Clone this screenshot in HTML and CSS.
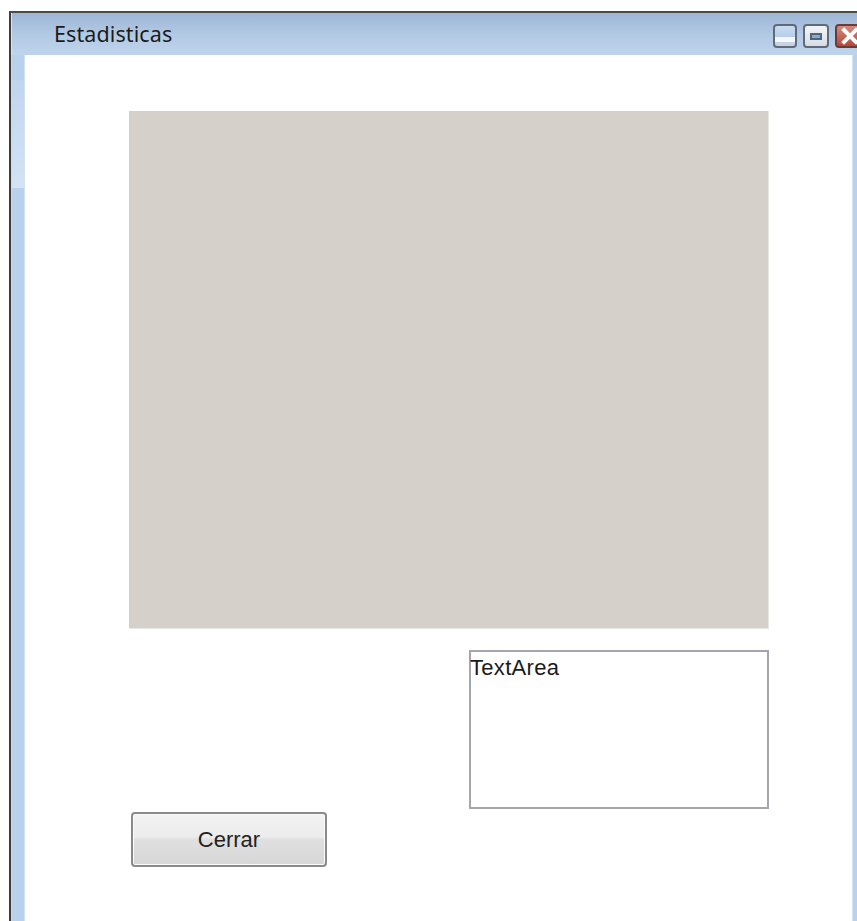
FILE: index.html
```html
<!DOCTYPE html>
<html lang="es">
<head>
<meta charset="utf-8">
<title>Estadisticas</title>
<link rel="stylesheet" href="styles.css">
</head>
<body>
<div class="window">
  <div class="titlebar">
    <span class="title">Estadisticas</span>
    <div class="controls">
      <span class="ctl ctl-min"></span>
      <span class="ctl ctl-max"><span class="max-box"></span></span>
      <span class="ctl ctl-close">
        <svg width="26" height="24" viewBox="0 0 26 24">
          <path d="M7 6 L19 18 M19 6 L7 18" stroke="#fff" stroke-width="4" stroke-linecap="square"/>
        </svg>
      </span>
    </div>
  </div>
  <div class="frame-body">
    <div class="side side-left"><span class="side-glow"></span></div>
    <div class="content">
      <div class="chart-panel"></div>
      <div class="lower">
        <div class="text-area">TextArea</div>
        <button class="btn-close" type="button">Cerrar</button>
      </div>
    </div>
    <div class="side side-right"></div>
  </div>
</div>
</body>
</html>
```
FILE: styles.css
```css
html, body {
  margin: 0;
  padding: 0;
  background: #ffffff;
  overflow: hidden;
  height: 921px;
}

.window {
  margin: 11px 0 0 9px;
  width: 880px;
  height: 920px;
  border-top: 2px solid #4a4a4a;
  border-left: 2px solid #3e3e3e;
  display: flex;
  flex-direction: column;
  box-sizing: border-box;
}

.titlebar {
  height: 42px;
  flex: none;
  background: linear-gradient(to bottom, #9db6d4 0%, #b2c9e4 50%, #bfd4ec 100%);
  border-left: 1px solid #d8e4f2;
  display: flex;
  align-items: center;
  position: relative;
}

.title {
  font-family: "Noto Sans", "Open Sans", sans-serif;
  font-size: 21.5px;
  color: #1b1b1b;
  margin-left: 42px;
  margin-top: -1px;
  letter-spacing: 0.1px;
}

.controls {
  position: absolute;
  left: 761px;
  top: 11px;
  display: flex;
  gap: 6px;
}

.ctl {
  width: 24px;
  height: 24px;
  box-sizing: border-box;
  border: 2px solid #5f6b7b;
  border-radius: 4px;
  display: flex;
  align-items: center;
  justify-content: center;
  position: relative;
  overflow: hidden;
}

.ctl-min {
  background: linear-gradient(to bottom, #c9dcf0 0%, #b6cde8 55%, #f4f7fb 56%, #f4f7fb 78%, #c7d3e2 79%);
}

.ctl-max {
  width: 26px;
  background: linear-gradient(to bottom, #f2f4f7, #d7dde6);
}

.max-box {
  width: 12px;
  height: 7px;
  box-sizing: border-box;
  border: 2px solid #4f6680;
  background: #8fa9c8;
}

.ctl-close {
  width: 30px;
  background: linear-gradient(to bottom, #d48b80, #b4473a);
  border-color: #6d3a36;
  justify-content: flex-start;
}

.ctl-close svg {
  display: block;
}

.frame-body {
  flex: 1;
  display: flex;
  min-height: 0;
}

.side {
  flex: none;
  background: #b9d1ea;
  position: relative;
}

.side-left {
  width: 12px;
  border-left: 1px solid #d6d6d6;
  border-right: 1px solid #d2e2f3;
}

.side-glow {
  position: absolute;
  left: 0;
  right: 0;
  top: 25px;
  height: 108px;
  background: linear-gradient(to bottom, #c0d6ee, #d3e3f3);
}

.side-right {
  width: 28px;
  border-left: 1px solid #d2e2f3;
}

.content {
  width: 827px;
  flex: none;
  background: #ffffff;
  display: flex;
  flex-direction: column;
  padding: 56px 0 0 104px;
  box-sizing: border-box;
}

.chart-panel {
  width: 640px;
  height: 518px;
  background: #d5d1ca;
  border-right: 1px solid #e8e6e2;
  border-bottom: 1px solid #e8e6e2;
  box-sizing: border-box;
}

.lower {
  display: flex;
  flex-direction: column;
  margin-top: 21px;
}

.text-area {
  margin-left: 340px;
  width: 300px;
  height: 159px;
  box-sizing: border-box;
  border: 2px solid #a3a6ae;
  padding: 4px 0 0 0;
  font-family: "Liberation Sans", Arial, sans-serif;
  font-size: 22px;
  letter-spacing: 0.3px;
  line-height: 24px;
  color: #1a1a1a;
  text-indent: -1px;
}

.btn-close {
  margin: 3px 0 0 2px;
  width: 196px;
  height: 55px;
  box-sizing: border-box;
  border: 2px solid #8a8a8a;
  border-radius: 4px;
  background: linear-gradient(to bottom, #f3f3f3 0%, #ececec 45%, #e0e0e0 50%, #d6d6d6 100%);
  box-shadow: inset 0 0 0 1px #fafafa;
  font-family: "Liberation Sans", Arial, sans-serif;
  font-size: 22px;
  color: #222;
  padding: 0;
  cursor: default;
}
```
